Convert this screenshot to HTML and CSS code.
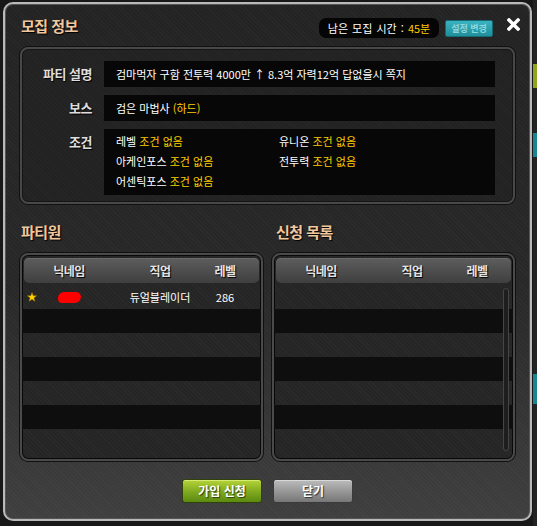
FILE: index.html
```html
<!DOCTYPE html>
<html lang="ko">
<head>
  <meta charset="UTF-8">
  <title>모집 정보</title>
  <link rel="stylesheet" href="styles.css">
</head>
<body>

  <div class="window">
    <!-- Title bar -->
    <div class="top">
      <h1 class="title">모집 정보</h1>
      <div class="timer">남은 모집 시간 : <span class="yellow">45분</span></div>
      <button class="btn-set">설정 변경</button>
      <span class="close">
        <svg width="13" height="13" viewBox="0 0 13 13">
          <path d="M2 2 L11 11 M11 2 L2 11" stroke="#fff" stroke-width="3.4" stroke-linecap="square"/>
        </svg>
      </span>
    </div>

    <!-- Party info -->
    <div class="info">
      <div class="info-row">
        <div class="label">파티 설명</div>
        <div class="value">검마먹자 구함 전투력 4000만 ↑ 8.3억 자력12억 답없을시 쪽지</div>
      </div>
      <div class="info-row">
        <div class="label">보스</div>
        <div class="value">검은 마법사 <span class="yellow">(하드)</span></div>
      </div>
      <div class="info-row cond-row">
        <div class="label">조건</div>
        <div class="value conds">
          <div>레벨 <span class="yellow">조건 없음</span></div>
          <div>유니온 <span class="yellow">조건 없음</span></div>
          <div>아케인포스 <span class="yellow">조건 없음</span></div>
          <div>전투력 <span class="yellow">조건 없음</span></div>
          <div>어센틱포스 <span class="yellow">조건 없음</span></div>
        </div>
      </div>
    </div>

    <!-- Member / applicant lists -->
    <div class="lists">
      <div class="list-col">
        <h2 class="sub-title">파티원</h2>
        <div class="list">
          <div class="list-head">
            <span></span><span>닉네임</span><span class="job">직업</span><span>레벨</span>
          </div>
          <div class="row">
            <span class="star">
              <svg width="10" height="10" viewBox="0 0 10 10">
                <path d="M5 0.5 L6.2 3.7 L9.6 3.8 L6.9 5.9 L7.9 9.3 L5 7.3 L2.1 9.3 L3.1 5.9 L0.4 3.8 L3.8 3.7 Z" fill="#ffd200" stroke="#a07000" stroke-width="0.5"/>
              </svg>
            </span>
            <span><i class="blot"></i></span>
            <span class="job">듀얼블레이더</span>
            <span>286</span>
          </div>
          <div class="row"></div>
          <div class="row"></div>
          <div class="row"></div>
          <div class="row"></div>
          <div class="row"></div>
          <div class="row"></div>
        </div>
      </div>

      <div class="list-col">
        <h2 class="sub-title">신청 목록</h2>
        <div class="list">
          <div class="list-head">
            <span></span><span>닉네임</span><span class="job">직업</span><span>레벨</span>
          </div>
          <div class="row"></div>
          <div class="row"></div>
          <div class="row"></div>
          <div class="row"></div>
          <div class="row"></div>
          <div class="row"></div>
          <div class="row"></div>
          <div class="scroll"></div>
        </div>
      </div>
    </div>

    <div class="buttons">
      <button class="btn btn-join">가입 신청</button>
      <button class="btn btn-close">닫기</button>
    </div>
  </div>

  <!-- edge of the window behind -->
  <div class="behind">
    <div class="piece green"></div>
    <div class="piece teal t1"></div>
    <div class="piece teal t2"></div>
  </div>

</body>
</html>
```

FILE: styles.css
```css
* {
  box-sizing: border-box;
  font-family: "Noto Sans CJK KR", "Noto Sans", sans-serif;
}

body {
  margin: 0;
  display: flex;
  align-items: flex-start;
  height: 526px;
  background: #181818;
  overflow: hidden;
}

.yellow {
  color: #ffcc00;
}

.window {
  width: 529px;
  height: 519px;
  margin: 2px 0 0 3px;
  border: 2px solid #b9b9b9;
  border-radius: 10px;
  background:
    repeating-linear-gradient(45deg, rgba(255, 255, 255, 0.025) 0 1px, transparent 1px 3px),
    linear-gradient(180deg, #232323 0%, #282828 55%, #3f3f3f 100%);
  box-shadow: inset 0 0 0 1px #555;
  display: flex;
  flex-direction: column;
}

/* title bar */
.top {
  display: flex;
  align-items: flex-start;
  padding: 14px 10px 0 16px;
  height: 34px;
}

.title {
  margin: 0;
  font-size: 15px;
  line-height: 16px;
  letter-spacing: -0.5px;
  font-weight: bold;
  color: #f1c79e;
  text-shadow: 1px 1px 1px #000;
}

.timer {
  margin-left: auto;
  width: 120px;
  height: 20px;
  border-radius: 7px;
  background: #050505;
  color: #fff;
  font-size: 11px;
  line-height: 20px;
  text-align: center;
  word-spacing: 1px;
}

.btn-set {
  margin: 2px 0 0 6px;
  width: 48px;
  height: 17px;
  padding: 0;
  border: 1px solid #136a72;
  border-radius: 2px;
  background: linear-gradient(180deg, #39b3c0, #1f8f9b);
  color: #8fd5dc;
  font-size: 9px;
  font-weight: bold;
  line-height: 15px;
}

.close {
  margin: -6px 0 0 14px;
  width: 13px;
  height: 13px;
}

/* info panel */
.info {
  margin: 9px 15px 0;
  height: 157px;
  padding: 12px 18px 7px 0;
  border: 2px solid #484848;
  border-radius: 8px;
  background:
    repeating-linear-gradient(45deg, rgba(255, 255, 255, 0.02) 0 1px, transparent 1px 3px),
    #222;
  box-shadow: 0 0 0 1px #111, inset 0 0 0 1px #151515;
  display: flex;
  flex-direction: column;
  gap: 8px;
}

.info-row {
  display: flex;
  gap: 12px;
  height: 26px;
}

.info-row.cond-row {
  height: 66px;
}

.label {
  width: 70px;
  text-align: right;
  font-size: 13px;
  font-weight: bold;
  letter-spacing: -0.5px;
  color: #dedede;
  text-shadow: 1px 1px 1px #000;
  line-height: 26px;
}

.cond-row .label {
  line-height: 26px;
}

.value {
  flex: 1;
  background: #070707;
  color: #fff;
  font-size: 11px;
  line-height: 26px;
  padding: 0 12px;
}

.conds {
  display: grid;
  grid-template-columns: 163px auto;
  grid-auto-rows: 20px;
  line-height: 20px;
  padding-top: 2px;
}

/* lists */
.lists {
  margin: 16px 15px 0;
  display: grid;
  grid-template-columns: 1fr 1fr;
  gap: 9px;
}

.sub-title {
  margin: 0 0 9px 1px;
  font-size: 15px;
  line-height: 24px;
  letter-spacing: -0.5px;
  font-weight: bold;
  color: #f1c79e;
  text-shadow: 1px 1px 1px #000;
}

.list-col + .list-col .sub-title {
  margin-left: 4px;
}

.list {
  position: relative;
  height: 208px;
  border: 2px solid #4a4a4a;
  border-radius: 8px;
  background:
    repeating-linear-gradient(45deg, rgba(255, 255, 255, 0.025) 0 1px, transparent 1px 3px),
    #252525;
  box-shadow: 0 0 0 1px #111, inset 0 0 0 1px #080808;
  overflow: hidden;
}

.list-head,
.row {
  display: grid;
  grid-template-columns: 16px 62px 96px 58px;
  align-items: center;
  justify-items: center;
}

.list-head {
  margin: 3px 2px 2px;
  height: 25px;
  border-radius: 5px;
  background: linear-gradient(180deg, #5d5d5d, #3f3f3f);
  box-shadow: inset 0 1px 0 #6a6a6a;
  color: #e4e4e4;
  font-size: 12px;
  font-weight: bold;
  letter-spacing: -0.5px;
  text-shadow: 1px 1px 1px #000;
  grid-template-columns: 14px 62px 96px 58px;
}

.job {
  padding-left: 24px;
}

.row {
  height: 24px;
  color: #fff;
  font-size: 11px;
}

.row:nth-of-type(odd) {
  background: #0e0e0e;
}

.star {
  display: flex;
  padding-left: 4px;
}

.blot {
  display: block;
  width: 23px;
  height: 11px;
  border-radius: 6px 5px 6px 4px;
  background: #ff0000;
}

.scroll {
  position: absolute;
  top: 33px;
  right: 4px;
  width: 6px;
  height: 163px;
  border: 1px solid #454545;
  border-radius: 3px;
  background: #1e1e1e;
}

/* bottom buttons */
.buttons {
  margin-top: 18px;
  display: flex;
  justify-content: center;
  gap: 11px;
}

.btn {
  width: 80px;
  height: 24px;
  padding: 0;
  border-radius: 3px;
  color: #fff;
  font-size: 12px;
  font-weight: bold;
  line-height: 22px;
}

.btn-join {
  border: 1px solid #2f420b;
  background: linear-gradient(180deg, #b6d43a, #7ea81e 55%, #5c8a10);
  box-shadow: inset 0 1px 0 #d4ea70;
  text-shadow: 1px 1px 1px #2b3f05;
}

.btn-close {
  border: 1px solid #3a3a3a;
  background: linear-gradient(180deg, #bcbcbc, #959595 55%, #777);
  box-shadow: inset 0 1px 0 #d8d8d8;
  text-shadow: 1px 1px 1px #333;
}

/* window behind, right edge */
.behind {
  margin-left: 1px;
  width: 4px;
  height: 526px;
  background: #232323;
  display: flex;
  flex-direction: column;
}

.piece {
  height: 24px;
}

.green {
  margin-top: 64px;
  background: #8ea41e;
}

.teal {
  background: #19858f;
}

.t1 {
  margin-top: 45px;
}

.t2 {
  margin-top: 217px;
  height: 30px;
}
```
